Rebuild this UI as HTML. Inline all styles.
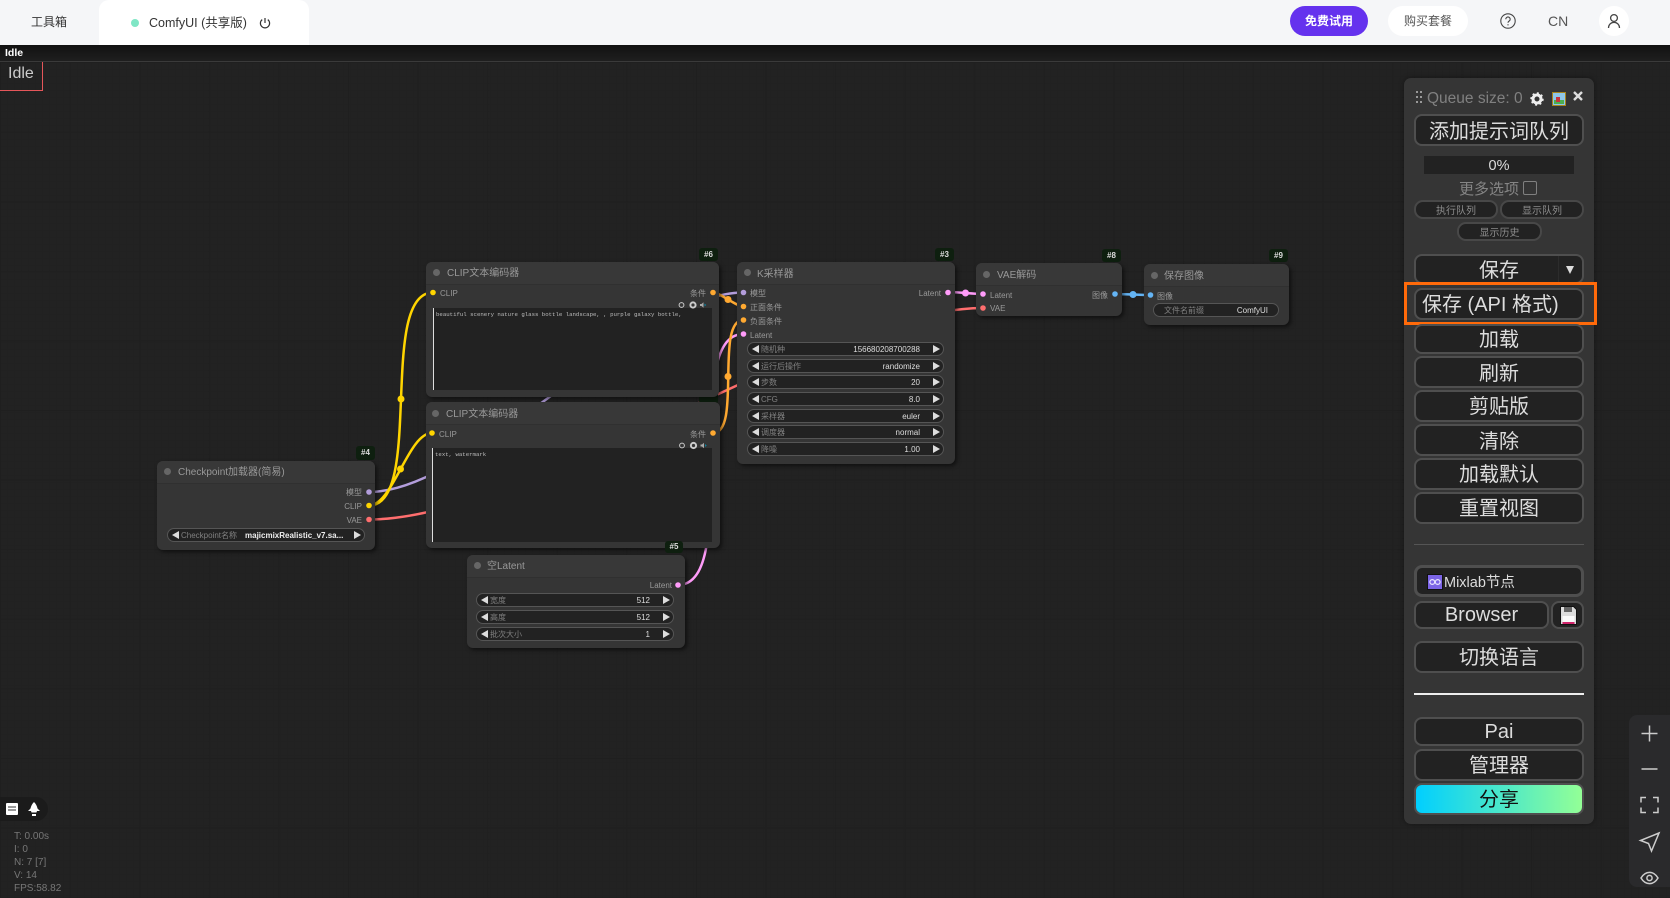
<!DOCTYPE html>
<html lang="zh"><head><meta charset="utf-8"><title>ComfyUI</title>
<style>
html,body{margin:0;padding:0;width:1670px;height:898px;overflow:hidden;background:#202020}
body,div,span{font-family:"Liberation Sans","Noto Sans CJK SC",sans-serif}
#root{position:relative;width:1670px;height:898px;overflow:hidden;filter:blur(.3px)}
#root div,#root svg{position:absolute}
.canvas{left:0;top:62px;width:1670px;height:836px;background-color:#222;
background-image:linear-gradient(#1f1f1f 1px,transparent 1px),linear-gradient(90deg,#1f1f1f 1px,transparent 1px),linear-gradient(#212121 1px,transparent 1px),linear-gradient(90deg,#212121 1px,transparent 1px);
background-size:69.6px 69.6px,69.6px 69.6px,7px 7px,7px 7px;background-position:0 0,0 0,0 0,0 0}
.n{background:#353535;border-radius:6px;box-shadow:2px 2px 4px rgba(0,0,0,.55)}
.h{background:#383838;border-radius:6px 6px 0 0;box-shadow:0 1px 0 #303030;height:22px}
.d{width:7px;height:7px;border-radius:50%;background:#666}
.t{font-size:10px;line-height:12px;color:#999;white-space:nowrap;margin-top:1.5px}
.s{font-size:8px;line-height:10px;color:#999;white-space:nowrap;margin-top:1px}
.sr{text-align:right}
.bd{width:19px;height:13px;background:#0e1f0f;border-radius:3px;color:#ddd;font-size:8px;font-weight:bold;line-height:13px;text-align:center}
.ta{background:#222;border-left:1.5px solid #ddd;box-sizing:border-box;font-family:"Liberation Mono",monospace !important;font-size:5.7px;line-height:8px;color:#bbb;padding:3px 0 0 2px;white-space:nowrap}
.w{height:14px;box-sizing:border-box;background:#222;border:1px solid #555;border-radius:7px;font-size:8px;line-height:14px}
.w .k{position:absolute;color:#808080;white-space:nowrap;left:13px;top:0}
.w .v{position:absolute;color:#ddd;white-space:nowrap;right:23px;top:0}
.w .l,.w .r{position:absolute;top:2px;width:0;height:0;border-top:4px solid transparent;border-bottom:4px solid transparent}
.w .l{left:3.5px;border-right:7px solid #ddd}
.w .r{right:3.5px;border-left:7px solid #ddd}
.b{left:1414px;width:170px;box-sizing:border-box;border:2px solid #4f4f4f;background:#222;border-radius:8px;font-size:20px;color:#ddd;text-align:center;white-space:nowrap}
.sb{box-sizing:border-box;height:19px;border:2px solid #484848;background:#222;border-radius:9px;font-size:10px;line-height:19px;color:#8c8c8c;text-align:center}
.st{left:14px;font-size:10px;line-height:12px;color:#777;white-space:nowrap;margin-top:2px}
</style></head><body><div id="root">

<!-- top bar -->
<div style="left:0;top:0;width:1670px;height:45px;background:#f5f6f8"></div>
<div style="left:99px;top:0;width:210px;height:45px;background:#fff;border-radius:10px 10px 0 0"></div>
<div style="left:31px;top:14px;font-size:12px;line-height:16px;color:#333">工具箱</div>
<div style="left:131px;top:19px;width:8px;height:8px;border-radius:50%;background:#7fe6c5"></div>
<div style="left:149px;top:15px;font-size:12.5px;line-height:17px;color:#333;white-space:nowrap">ComfyUI (共享版)</div>
<svg style="left:259px;top:17px" width="12" height="12" viewBox="0 0 12 12" fill="none" stroke="#333" stroke-width="1.2"><path d="M3.2 2.6A4.6 4.6 0 1 0 8.8 2.6"/><path d="M6 1v5"/></svg>
<div style="left:1290px;top:6px;width:78px;height:30px;border-radius:15px;background:#6532ee;color:#fff;font-size:12px;font-weight:bold;line-height:30px;text-align:center">免费试用</div>
<div style="left:1388px;top:6px;width:80px;height:30px;border-radius:15px;background:#fff;color:#555;font-size:12px;line-height:30px;text-align:center">购买套餐</div>
<svg style="left:1500px;top:13px" width="16" height="16" viewBox="0 0 16 16" fill="none" stroke="#444" stroke-width="1.1"><circle cx="8" cy="8" r="7.2"/><path d="M5.8 6.2a2.2 2.2 0 1 1 3.4 1.8c-.8.5-1.2 1-1.2 1.8"/><path d="M8 11.2v1.2"/></svg>
<div style="left:1548px;top:12px;font-size:14px;line-height:18px;color:#555">CN</div>
<div style="left:1599px;top:6px;width:30px;height:30px;border-radius:50%;background:#fff"></div>
<svg style="left:1607px;top:13px" width="14" height="16" viewBox="0 0 14 16" fill="none" stroke="#444" stroke-width="1.3"><circle cx="7" cy="5" r="3.4"/><path d="M1.5 15c0-3.4 2.4-5.6 5.5-5.6s5.500 2.200 5.500 5.600"/></svg>

<!-- dark strip -->
<div style="left:0;top:45px;width:1670px;height:16px;background:linear-gradient(#121212,#1f1f1f)"></div>
<div style="left:0;top:61px;width:1670px;height:1px;background:#3a3a3a"></div>
<div style="left:5px;top:47px;font-size:10.500px;font-weight:bold;line-height:12px;color:#fff">Idle</div>

<div class="canvas"></div>
<div style="left:0;top:62px;width:42px;height:28px;border-right:1px solid #e5565a;border-bottom:1px solid #e5565a"></div>
<div style="left:8px;top:64px;font-size:16px;line-height:19px;color:#ccc">Idle</div>

<!-- links -->
<svg style="left:0;top:0" width="1670" height="898" fill="none" stroke-width="2.500">
<path d="M369 492C474 492 638 292 743.500 292.500" stroke="#b39ddb"/>
<path d="M369 519.500C531 519.500 821 308 983 308" stroke="#ff6e6e"/>
<path d="M369 505.500C424.600 505.500 377.400 292.500 433 292.500" stroke="#ffd500"/>
<path d="M369 505.500C393 505.500 408 433 432 433" stroke="#ffd500"/>
<path d="M678 585C743 585 678.500 334 743.500 334" stroke="#ff9cf9"/>
<path d="M713 292.500C720 292.500 736 306.500 743.500 306.500" stroke="#ffa931"/>
<path d="M713 433C742 433 714.500 320 743.500 320" stroke="#ffa931"/>
<path d="M948 292C957 292 974 294 983 294" stroke="#ff9cf9"/>
<path d="M1115 294C1124 294 1141 295 1150.500 295" stroke="#64b5f6"/>
<circle cx="401" cy="399" r="3.500" fill="#ffd500" stroke="none"/>
<circle cx="400.500" cy="469" r="3.500" fill="#ffd500" stroke="none"/>
<circle cx="728" cy="299.500" r="3.500" fill="#ffa931" stroke="none"/>
<circle cx="728" cy="376.500" r="3.500" fill="#ffa931" stroke="none"/>
<circle cx="965.500" cy="293" r="3.500" fill="#ff9cf9" stroke="none"/>
<circle cx="1133" cy="294.500" r="3.500" fill="#64b5f6" stroke="none"/>
</svg>

<!-- badges behind -->
<div class="bd" style="left:699px;top:248px">#6</div>
<div class="bd" style="left:699px;top:386px;height:18px">#7</div>
<div class="bd" style="left:935px;top:248px">#3</div>
<div class="bd" style="left:1102px;top:249px">#8</div>
<div class="bd" style="left:1269px;top:249px">#9</div>
<div class="bd" style="left:356px;top:446px;height:14px">#4</div>

<!-- node 6 -->
<div class="n" style="left:426px;top:262px;width:293px;height:135px"><div class="h" style="left:0;top:0;width:293px"></div></div>
<div class="d" style="left:433px;top:268.500px"></div>
<div class="t" style="left:447px;top:266px">CLIP文本编码器</div>
<div class="s" style="left:440px;top:288px">CLIP</div>
<div class="s sr" style="left:670px;top:288px;width:36px">条件</div>
<div class="ta" style="left:433px;top:308px;width:279px;height:82px">beautiful scenery nature glass bottle landscape, , purple galaxy bottle,</div>

<!-- node 7 -->
<div class="n" style="left:425.500px;top:402px;width:294px;height:146px"><div class="h" style="left:0;top:0;width:294px"></div></div>
<div class="d" style="left:432px;top:409.500px"></div>
<div class="t" style="left:446px;top:407px">CLIP文本编码器</div>
<div class="s" style="left:439px;top:429px">CLIP</div>
<div class="s sr" style="left:670px;top:429px;width:36px">条件</div>
<div class="ta" style="left:432px;top:448px;width:280px;height:94px">text, watermark</div>

<!-- KSampler -->
<div class="n" style="left:737px;top:262px;width:218px;height:202px"><div class="h" style="left:0;top:0;width:218px"></div></div>
<div class="d" style="left:743.500px;top:268.500px"></div>
<div class="t" style="left:757px;top:267px">K采样器</div>
<div class="s" style="left:750px;top:288px">模型</div>
<div class="s" style="left:750px;top:302px">正面条件</div>
<div class="s" style="left:750px;top:316px">负面条件</div>
<div class="s" style="left:750px;top:330px">Latent</div>
<div class="s sr" style="left:901px;top:288px;width:40px">Latent</div>
<div class="w" style="left:747px;top:342px;width:197px"><i class="l"></i><span class="k">随机种</span><span class="v">156680208700288</span><i class="r"></i></div>
<div class="w" style="left:747px;top:359px;width:197px"><i class="l"></i><span class="k">运行后操作</span><span class="v">randomize</span><i class="r"></i></div>
<div class="w" style="left:747px;top:375px;width:197px"><i class="l"></i><span class="k">步数</span><span class="v">20</span><i class="r"></i></div>
<div class="w" style="left:747px;top:392px;width:197px"><i class="l"></i><span class="k">CFG</span><span class="v">8.0</span><i class="r"></i></div>
<div class="w" style="left:747px;top:409px;width:197px"><i class="l"></i><span class="k">采样器</span><span class="v">euler</span><i class="r"></i></div>
<div class="w" style="left:747px;top:425px;width:197px"><i class="l"></i><span class="k">调度器</span><span class="v">normal</span><i class="r"></i></div>
<div class="w" style="left:747px;top:442px;width:197px"><i class="l"></i><span class="k">降噪</span><span class="v">1.00</span><i class="r"></i></div>

<!-- VAE decode -->
<div class="n" style="left:976px;top:263px;width:146px;height:53px"><div class="h" style="left:0;top:0;width:146px"></div></div>
<div class="d" style="left:983px;top:270.500px"></div>
<div class="t" style="left:997px;top:268px">VAE解码</div>
<div class="s" style="left:990px;top:289.500px">Latent</div>
<div class="s" style="left:990px;top:303px">VAE</div>
<div class="s sr" style="left:1072px;top:289.500px;width:36px">图像</div>

<!-- Save image -->
<div class="n" style="left:1144px;top:264px;width:145px;height:61px"><div class="h" style="left:0;top:0;width:145px"></div></div>
<div class="d" style="left:1150.500px;top:271.500px"></div>
<div class="t" style="left:1164px;top:269px">保存图像</div>
<div class="s" style="left:1157px;top:290.500px">图像</div>
<div class="w" style="left:1153px;top:303px;width:126px"><span class="k" style="left:10px">文件名前缀</span><span class="v" style="right:10px">ComfyUI</span></div>

<!-- Checkpoint -->
<div class="n" style="left:157px;top:461px;width:218px;height:89px"><div class="h" style="left:0;top:0;width:218px"></div></div>
<div class="d" style="left:164px;top:468px"></div>
<div class="t" style="left:178px;top:465.500px">Checkpoint加载器(简易)</div>
<div class="s sr" style="left:322px;top:487px;width:40px">模型</div>
<div class="s sr" style="left:322px;top:500.500px;width:40px">CLIP</div>
<div class="s sr" style="left:322px;top:514.500px;width:40px">VAE</div>
<div class="w" style="left:167px;top:528px;width:198px"><i class="l"></i><span class="k">Checkpoint名称</span><span class="v" style="left:77px;right:auto;font-weight:bold;color:#eee">majicmixRealistic_v7.sa...</span><i class="r"></i></div>

<!-- Latent -->
<div class="n" style="left:467px;top:555px;width:218px;height:93px"><div class="h" style="left:0;top:0;width:218px"></div></div>
<div class="d" style="left:473.500px;top:561.500px"></div>
<div class="t" style="left:487px;top:559px">空Latent</div>
<div class="s sr" style="left:632px;top:580px;width:40px">Latent</div>
<div class="w" style="left:476px;top:593px;width:198px"><i class="l"></i><span class="k">宽度</span><span class="v">512</span><i class="r"></i></div>
<div class="w" style="left:476px;top:610px;width:198px"><i class="l"></i><span class="k">高度</span><span class="v">512</span><i class="r"></i></div>
<div class="w" style="left:476px;top:627px;width:198px"><i class="l"></i><span class="k">批次大小</span><span class="v">1</span><i class="r"></i></div>
<div class="bd" style="left:665px;top:541px;width:18px;height:12px;line-height:12px">#5</div>

<!-- slots and small node icons -->
<svg style="left:0;top:0" width="1670" height="898">
<g fill="#ffd500"><circle cx="433" cy="292.500" r="2.800"/><circle cx="432" cy="433" r="2.800"/><circle cx="369" cy="505.500" r="2.800"/></g>
<g fill="#ffa931"><circle cx="713" cy="292.500" r="2.800"/><circle cx="713" cy="433" r="2.800"/><circle cx="743.500" cy="306.500" r="2.800"/><circle cx="743.500" cy="320" r="2.800"/></g>
<g fill="#b39ddb"><circle cx="743.500" cy="292.500" r="2.800"/><circle cx="369" cy="492" r="2.800"/></g>
<g fill="#ff9cf9"><circle cx="743.500" cy="334" r="2.800"/><circle cx="948" cy="292.500" r="2.800"/><circle cx="983" cy="294" r="2.800"/><circle cx="678" cy="585" r="2.800"/></g>
<g fill="#ff6e6e"><circle cx="983" cy="308" r="2.800"/><circle cx="369" cy="519.500" r="2.800"/></g>
<g fill="#64b5f6"><circle cx="1115" cy="294" r="2.800"/><circle cx="1150.500" cy="295" r="2.800"/></g>
<g fill="none" stroke="#ccc"><circle cx="681.500" cy="305" r="2.400" stroke-width="1"/><circle cx="682" cy="445.500" r="2.400" stroke-width="1"/>
<circle cx="693" cy="305" r="2.600" stroke-width="2"/><circle cx="693.500" cy="445.500" r="2.600" stroke-width="2"/></g>
<g><path d="M700 304h1.500l2-1.800v5.600l-2-1.800H700z" fill="#aaa"/><path d="M704.500 303.500l1.800 1.500-1.800 1.500z" fill="#0b7f9e"/>
<path d="M700.500 444.500h1.500l2-1.800v5.600l-2-1.800h-1.500z" fill="#aaa"/><path d="M705 444l1.800 1.500-1.800 1.500z" fill="#0b7f9e"/></g>
</svg>

<!-- menu panel -->
<div style="left:1404px;top:78px;width:190px;height:746px;background:#353535;border-radius:7px;box-shadow:0 0 6px rgba(0,0,0,.4)"></div>
<svg style="left:1416px;top:91px" width="6" height="13" fill="#999"><rect x="0" y="0" width="2" height="2"/><rect x="4" y="0" width="2" height="2"/><rect x="0" y="5" width="2" height="2"/><rect x="4" y="5" width="2" height="2"/><rect x="0" y="10" width="2" height="2"/><rect x="4" y="10" width="2" height="2"/></svg>
<div style="left:1427px;top:89px;font-size:15.500px;line-height:19px;color:#808080;white-space:nowrap">Queue size: 0</div>
<svg style="left:1530px;top:92px" width="14" height="14" fill="none"><circle cx="7" cy="7" r="4" stroke="#eee" stroke-width="3"/><circle cx="7" cy="7" r="5.800" stroke="#eee" stroke-width="1.800" stroke-dasharray="2 2.500"/></svg>
<svg style="left:1552px;top:92px" width="14" height="14"><rect x="0.500" y="0.500" width="13" height="13" fill="#8fc7e8" stroke="#a8841c"/><rect x="2" y="8" width="10" height="4" fill="#4caf50"/><rect x="4" y="5" width="4" height="5" fill="#c8323c"/></svg>
<svg style="left:1573px;top:91px" width="10" height="10" stroke="#ddd" stroke-width="2.400"><path d="M1 1l8 8M9 1l-8 8"/></svg>

<div class="b" style="top:114px;height:32px;line-height:33px">添加提示词队列</div>
<div style="left:1424px;top:156px;width:150px;height:18px;background:#222;color:#ddd;font-size:14.500px;line-height:21px;text-align:center">0%</div>
<div style="left:1459px;top:180px;font-size:15px;line-height:19px;color:#858585;white-space:nowrap">更多选项</div>
<div style="left:1523px;top:181px;width:12px;height:12px;border:1px solid #808080;border-radius:2px"></div>
<div class="sb" style="left:1414px;top:200px;width:84px">执行队列</div>
<div class="sb" style="left:1500px;top:200px;width:84px">显示队列</div>
<div class="sb" style="left:1457px;top:222px;width:85px">显示历史</div>

<div class="b" style="top:254px;height:30px;line-height:30px">保存</div>
<div style="left:1558px;top:256px;width:1px;height:26px;background:#2c2c2c"></div>
<div style="left:1566px;top:266px;width:0;height:0;border-left:4.500px solid transparent;border-right:4.500px solid transparent;border-top:8px solid #ddd"></div>
<div class="b" style="top:288px;height:32px;line-height:31px;text-align:left;padding-left:6px">保存 (API 格式)</div>
<div style="left:1404px;top:282px;width:193px;height:43px;box-sizing:border-box;border:3.500px solid #ff6a0a"></div>
<div class="b" style="top:324px;height:30px;line-height:28px">加载</div>
<div class="b" style="top:356px;height:32px;line-height:33px">刷新</div>
<div class="b" style="top:390px;height:32px;line-height:31px">剪贴版</div>
<div class="b" style="top:424px;height:32px;line-height:33px">清除</div>
<div class="b" style="top:458px;height:32px;line-height:31px">加载默认</div>
<div class="b" style="top:492px;height:32px;line-height:31px">重置视图</div>
<div style="left:1414px;top:544px;width:170px;height:1px;background:#555"></div>
<div class="b" style="top:565px;height:32px;border-width:3px;line-height:30px;font-size:14.500px;text-align:left;padding-left:27px">Mixlab节点</div>
<svg style="left:1427px;top:574px" width="16" height="16"><rect x="0.500" y="0.500" width="15" height="15" fill="#7c65e6" stroke="#111"/><g fill="none" stroke="#e8e4ff" stroke-width="1.200"><circle cx="5.300" cy="8" r="2.400"/><circle cx="10.700" cy="8" r="2.400"/></g></svg>
<div class="b" style="top:601px;width:135px;height:28px;line-height:25px">Browser</div>
<div class="b" style="left:1551px;top:601px;width:33px;height:28px"></div>
<svg style="left:1560px;top:606px" width="17" height="19"><path d="M.5.500h13l3 3v15H.500z" fill="#ddd" stroke="#111"/><rect x="4" y="1" width="8" height="5" fill="#666"/><rect x="2.500" y="10" width="12" height="8" fill="#fafafa"/><rect x="2.500" y="16" width="12" height="2" fill="#d0246a"/></svg>
<div class="b" style="top:641px;height:32px;line-height:31px">切换语言</div>
<div style="left:1414px;top:693px;width:170px;height:2px;background:#eee"></div>
<div class="b" style="top:717px;height:29px;line-height:27px">Pai</div>
<div class="b" style="top:749px;height:32px;line-height:31px">管理器</div>
<div class="b" style="top:783px;height:32px;line-height:31px;background:linear-gradient(90deg,#00cfff,#93ff96);color:#111">分享</div>

<!-- right tools -->
<div style="left:1629px;top:715px;width:41px;height:172px;background:#2a2a2c;border-radius:8px 0 0 8px"></div>
<svg style="left:1629px;top:715px" width="41" height="172" fill="none" stroke="#ccc" stroke-width="1.500">
<path d="M12.500 18.500h16M20.500 10.500v16"/>
<path d="M12.500 54h16"/>
<path d="M17 82.500h-5v5M24 82.500h5v5M17 97.500h-5v-5M24 97.500h5v-5"/>
<path d="M30 118l-18.500 7.500 8 3 3 7.500z"/>
<path d="M12 163c4.500-7.500 12.500-7.500 17 0c-4.500 7.500-12.500 7.500-17 0z"/><circle cx="20.500" cy="163" r="2.600"/>
</svg>

<!-- bottom-left -->
<div style="left:0;top:797px;width:48px;height:24px;background:#1b1b1b;border-radius:0 12px 12px 0"></div>
<svg style="left:6px;top:803px" width="12" height="12"><rect width="12" height="12" rx="1" fill="#fff"/><path d="M2 4h8M2 7h8" stroke="#333"/></svg>
<svg style="left:28px;top:802px" width="12" height="14" fill="#fff"><path d="M6 0C8 2 9 4 9.500 6.500L12 9H9L8.500 10.500H3.500L3 9H0L2.500 6.500C3 4 4 2 6 0z"/><rect x="4" y="12" width="4" height="2"/></svg>
<div class="st" style="top:829px">T: 0.00s</div>
<div class="st" style="top:842px">I: 0</div>
<div class="st" style="top:855px">N: 7 [7]</div>
<div class="st" style="top:868px">V: 14</div>
<div class="st" style="top:881px">FPS:58.82</div>

</div></body></html>
